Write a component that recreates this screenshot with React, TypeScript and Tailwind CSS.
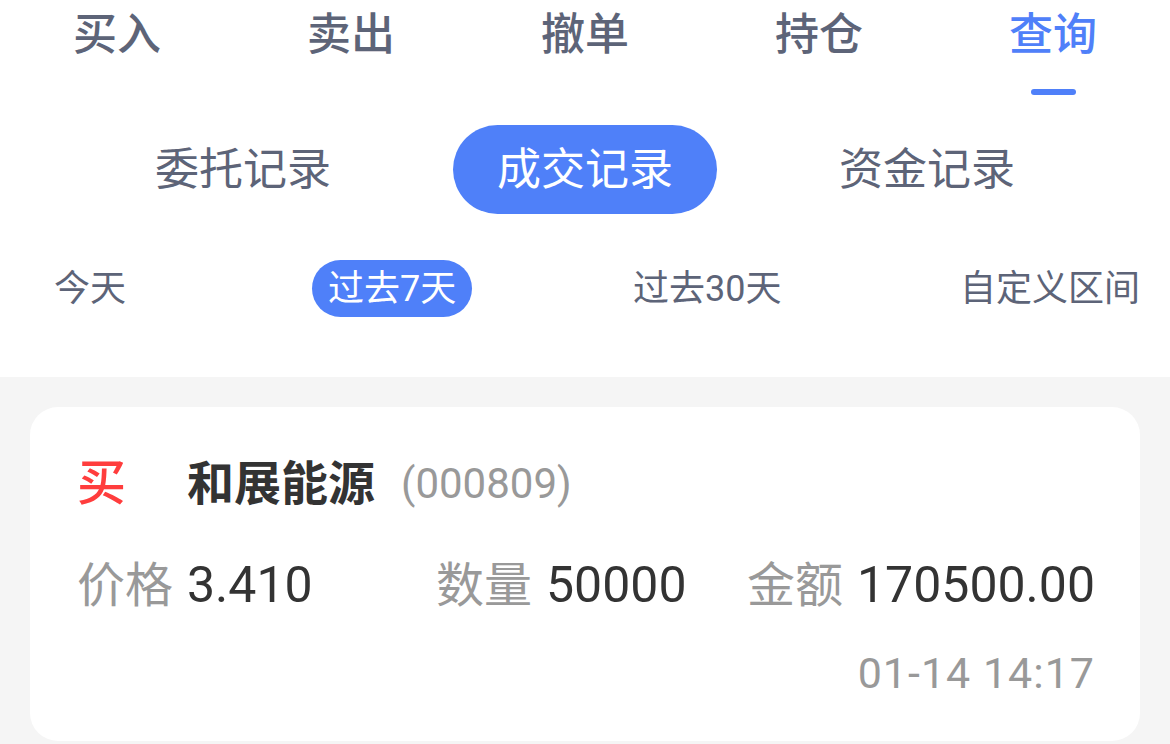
const font = { fontFamily: 'Roboto, "Noto Sans CJK SC", sans-serif' }

const tabs = ['买入', '卖出', '撤单', '持仓', '查询']
const records = ['委托记录', '成交记录', '资金记录']
const ranges = ['今天', '过去7天', '过去30天', '自定义区间']

function TopTabs() {
  return (
    <div className="grid h-[100px] grid-cols-5">
      {tabs.map((t, i) => {
        const active = i === 4
        return (
          <div key={t} className="flex flex-col items-center pt-[12px]">
            <span
              className={`text-[44px] font-medium leading-[46px] ${active ? 'text-[#4f80f9]' : 'text-[#5d6478]'}`}
            >
              {t}
            </span>
            {active && <div className="mt-[31px] h-[6px] w-[45px] rounded-full bg-[#4f80f9]" />}
          </div>
        )
      })}
    </div>
  )
}

function RecordTabs() {
  return (
    <div className="mt-[25px] grid grid-cols-3 px-[72px]">
      {records.map((r, i) => (
        <div key={r} className="flex justify-center">
          <span
            className={`flex h-[89px] items-center rounded-full px-[44px] text-[44px] ${i === 1 ? 'bg-[#4f80f9] text-white' : 'text-[#5d6478]'}`}
          >
            {r}
          </span>
        </div>
      ))}
    </div>
  )
}

function RangeTabs() {
  return (
    <div className="mt-[46px] grid grid-cols-[258px_321px_327px_1fr] items-center pl-[54px] pb-[60px]">
      {ranges.map((r, i) => (
        <div key={r} className="flex">
          <span
            className={`flex h-[57px] items-center rounded-full text-[36px] ${i === 1 ? 'bg-[#4f80f9] px-[16px] text-white' : 'text-[#5d6478]'}`}
          >
            {r}
          </span>
        </div>
      ))}
    </div>
  )
}

function TradeCard() {
  return (
    <div className="mx-[30px] mt-[30px] rounded-[28px] bg-white pt-[50px] pr-[45px] pb-[44px] pl-[47px]">
      <div className="flex items-center leading-[54px]">
        <span className="w-[110px] text-[49px] font-medium text-[#ff3d3d]">买</span>
        <span className="text-[47px] font-bold text-[#333]">和展能源</span>
        <span className="ml-[26px] text-[42px] text-[#999]">(000809)</span>
      </div>
      <div className="mt-[47px] grid grid-cols-[359px_311px_1fr] items-baseline text-[48px] leading-[54px]">
        <div>
          <span className="text-[#999]">价格</span>
          <span className="ml-[14px] text-[50px] text-[#333]">3.410</span>
        </div>
        <div>
          <span className="text-[#999]">数量</span>
          <span className="ml-[14px] text-[50px] text-[#333]">50000</span>
        </div>
        <div className="text-right">
          <span className="text-[#999]">金额</span>
          <span className="ml-[14px] text-[50px] text-[#333]">170500.00</span>
        </div>
      </div>
      <div className="mt-[36px] text-right text-[43px] leading-[48px] tracking-[1px] text-[#999]">
        01-14 14:17
      </div>
    </div>
  )
}

export default function App() {
  return (
    <div className="h-[744px] w-[1170px] overflow-hidden bg-[#f5f5f5]" style={font}>
      <div className="bg-white">
        <TopTabs />
        <RecordTabs />
        <RangeTabs />
      </div>
      <TradeCard />
    </div>
  )
}
